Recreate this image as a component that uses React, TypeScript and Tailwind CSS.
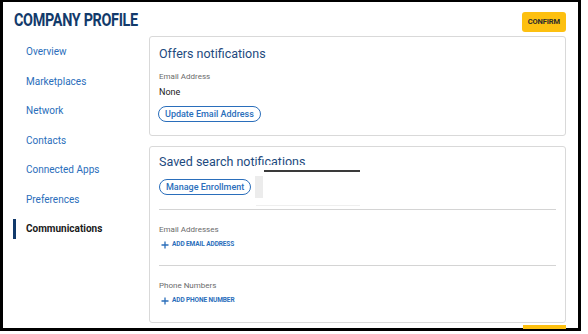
import React from "react";

const navItems = [
  "Overview",
  "Marketplaces",
  "Network",
  "Contacts",
  "Connected Apps",
  "Preferences",
  "Communications",
];

function Plus() {
  return (
    <svg width="8" height="8" viewBox="0 0 8 8" className="shrink-0">
      <path d="M4 0.5V7.5M0.5 4H7.5" stroke="#2a6ebb" strokeWidth="1.3" />
    </svg>
  );
}

export default function App() {
  return (
    <div
      className="relative w-[588px] h-[334px] bg-white overflow-hidden"
      style={{ fontFamily: "Roboto, 'Liberation Sans', sans-serif" }}
    >
      <div className="w-[581px] h-[331px] border-t-2 border-l-[3px] border-r-[3px] border-b-[3px] border-black flex flex-col overflow-hidden">
        {/* Header */}
        <div className="flex items-center justify-between pl-[11px] pr-[12px] pt-[4px] h-[32px] shrink-0">
          <h1 className="text-[18px] leading-[20px] font-bold text-[#123a6b] tracking-[-0.4px] scale-x-[0.8] origin-left whitespace-nowrap">
            COMPANY PROFILE
          </h1>
          <button className="h-[20px] px-[6px] rounded-[3px] bg-[#fdc010] text-[7.5px] font-bold text-[#2b2b2b] tracking-[-0.1px] mt-[4px]">
            CONFIRM
          </button>
        </div>

        <div className="flex flex-1 pt-[2px]">
          {/* Sidebar */}
          <nav className="w-[146px] shrink-0 pl-[10px] pt-[1px] flex flex-col">
            {navItems.map((item) => {
              const active = item === "Communications";
              return (
                <div key={item} className="flex items-center h-[29.5px]">
                  <div
                    className={
                      active
                        ? "w-[3px] h-[20px] bg-[#123a6b] mr-[10px]"
                        : "w-[3px] h-[20px] mr-[10px]"
                    }
                  />
                  <span
                    className={
                      active
                        ? "text-[10px] font-bold text-[#1a1a1a]"
                        : "text-[10px] text-[#2a6ebb]"
                    }
                  >
                    {item}
                  </span>
                </div>
              );
            })}
          </nav>

          {/* Content */}
          <div className="flex-1 pr-[12px] flex flex-col gap-[10px]">
            <section className="border border-[#d9d9d9] rounded-[3px] pl-[9px] pt-[8px] pb-[9px] h-[100px]">
              <h2 className="text-[12.5px] leading-[18px] text-[#1d4a7e]">Offers notifications</h2>
              <div className="mt-[9px] text-[8px] leading-[10px] text-[#6b6b6b]">Email Address</div>
              <div className="mt-[4px] text-[9px] leading-[12px] text-[#1a1a1a]">None</div>
              <button className="mt-[8px] -ml-[1px] h-[16px] px-[6px] rounded-full border border-[#2a6ebb] text-[9px] leading-[12px] font-medium text-[#2a6ebb]">
                Update Email Address
              </button>
            </section>

            <section className="relative border border-[#d9d9d9] rounded-[3px] h-[177px] px-[9px] pt-[6px]">
              <h2 className="text-[12.5px] leading-[18px] text-[#1d4a7e]">Saved search notifications</h2>
              <div className="mt-[8px] flex items-center">
                <button className="h-[16px] px-[6px] rounded-full border border-[#2a6ebb] text-[9px] leading-[12px] font-medium text-[#2a6ebb]">
                  Manage Enrollment
                </button>
                <span className="ml-[6px] text-[8px] text-[#2a6ebb]">)</span>
              </div>
              <div className="mt-[14px] border-t border-[#d4d4d4]" />
              <div className="mt-[15px] text-[8px] leading-[10px] text-[#6b6b6b]">Email Addresses</div>
              <div className="mt-[5px] flex items-center gap-[3px] pl-[2px]">
                <Plus />
                <span className="text-[6.5px] font-bold text-[#2a6ebb] tracking-[-0.1px]">ADD EMAIL ADDRESS</span>
              </div>
              <div className="mt-[15px] border-t border-[#d4d4d4]" />
              <div className="mt-[15px] text-[8px] leading-[10px] text-[#6b6b6b]">Phone Numbers</div>
              <div className="mt-[5px] flex items-center gap-[3px] pl-[2px]">
                <Plus />
                <span className="text-[6.5px] font-bold text-[#2a6ebb] tracking-[-0.1px]">ADD PHONE NUMBER</span>
              </div>

              {/* redacted overlay */}
              <div className="absolute left-[106px] top-[18px] w-[104px] h-[41px] bg-white border-b border-[#efefef]" />
              <div className="absolute left-[105px] top-[29px] w-[8px] h-[22px] bg-[#ececec]" />
              <div className="absolute left-[114px] top-[23px] w-[96px] h-[2px] bg-[#3a3a3a]" />
            </section>
          </div>
        </div>
        <div className="absolute left-[523px] top-[325px] w-[43px] h-[4px] bg-[#fdc010]" />
      </div>
    </div>
  );
}
